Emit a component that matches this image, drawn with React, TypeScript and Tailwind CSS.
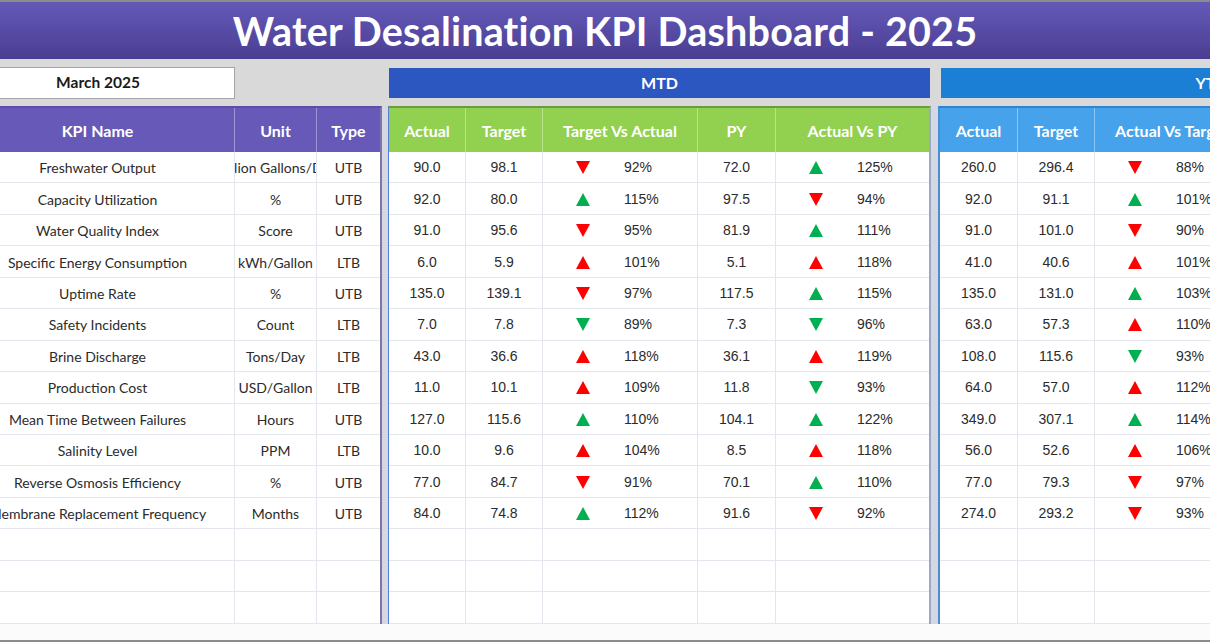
import React from 'react';

type Kpi = {
  name: string;
  unit: string;
  type: 'UTB' | 'LTB';
  mtd: [string, string, number, string, number];
  ytd: [string, string, number];
};

const kpis: Kpi[] = [
  { name: 'Freshwater Output', unit: 'Million Gallons/Day', type: 'UTB', mtd: ['90.0', '98.1', 92, '72.0', 125], ytd: ['260.0', '296.4', 88] },
  { name: 'Capacity Utilization', unit: '%', type: 'UTB', mtd: ['92.0', '80.0', 115, '97.5', 94], ytd: ['92.0', '91.1', 101] },
  { name: 'Water Quality Index', unit: 'Score', type: 'UTB', mtd: ['91.0', '95.6', 95, '81.9', 111], ytd: ['91.0', '101.0', 90] },
  { name: 'Specific Energy Consumption', unit: 'kWh/Gallon', type: 'LTB', mtd: ['6.0', '5.9', 101, '5.1', 118], ytd: ['41.0', '40.6', 101] },
  { name: 'Uptime Rate', unit: '%', type: 'UTB', mtd: ['135.0', '139.1', 97, '117.5', 115], ytd: ['135.0', '131.0', 103] },
  { name: 'Safety Incidents', unit: 'Count', type: 'LTB', mtd: ['7.0', '7.8', 89, '7.3', 96], ytd: ['63.0', '57.3', 110] },
  { name: 'Brine Discharge', unit: 'Tons/Day', type: 'LTB', mtd: ['43.0', '36.6', 118, '36.1', 119], ytd: ['108.0', '115.6', 93] },
  { name: 'Production Cost', unit: 'USD/Gallon', type: 'LTB', mtd: ['11.0', '10.1', 109, '11.8', 93], ytd: ['64.0', '57.0', 112] },
  { name: 'Mean Time Between Failures', unit: 'Hours', type: 'UTB', mtd: ['127.0', '115.6', 110, '104.1', 122], ytd: ['349.0', '307.1', 114] },
  { name: 'Salinity Level', unit: 'PPM', type: 'LTB', mtd: ['10.0', '9.6', 104, '8.5', 118], ytd: ['56.0', '52.6', 106] },
  { name: 'Reverse Osmosis Efficiency', unit: '%', type: 'UTB', mtd: ['77.0', '84.7', 91, '70.1', 110], ytd: ['77.0', '79.3', 97] },
  { name: 'Membrane Replacement Frequency', unit: 'Months', type: 'UTB', mtd: ['84.0', '74.8', 112, '91.6', 92], ytd: ['274.0', '293.2', 93] },
];

const EMPTY_ROWS = 3;

const Arrow = ({ pct, type }: { pct: number; type: 'UTB' | 'LTB' }) => {
  const up = pct >= 100;
  const good = (up && type === 'UTB') || (!up && type === 'LTB');
  const fill = good ? '#00b050' : '#ff0000';
  return (
    <svg width="14" height="13" viewBox="0 0 14 13">
      {up ? <polygon points="7,0 14,13 0,13" fill={fill} /> : <polygon points="0,0 14,0 7,13" fill={fill} />}
    </svg>
  );
};

const Cell = ({ w, children, last }: { w: string; children?: React.ReactNode; last?: boolean }) => (
  <div className={`${w} shrink-0 h-full flex items-center justify-center overflow-hidden whitespace-nowrap pt-[1px] ${last ? '' : 'border-r border-[#e3e6ec]'}`}>
    {children}
  </div>
);

const PctCell = ({ w, pct, type, last }: { w: string; pct?: number; type?: 'UTB' | 'LTB'; last?: boolean }) => (
  <div className={`${w} shrink-0 h-full flex items-center overflow-hidden whitespace-nowrap pt-[1px] ${last ? '' : 'border-r border-[#e3e6ec]'}`}>
    {pct !== undefined && type && (
      <>
        <div className="w-[33px] shrink-0" />
        <Arrow pct={pct} type={type} />
        <div className="w-[34px] shrink-0" />
        <span>{pct}%</span>
      </>
    )}
  </div>
);

const HeadCell = ({ w, label, line }: { w: string; label: string; line?: string }) => (
  <div className={`${w} shrink-0 h-full flex items-center justify-center whitespace-nowrap pt-[2px] ${line ?? ''}`}>{label}</div>
);

const rowCls = 'h-[31.45px] flex border-b border-[#e3e6ec] bg-white';
const numFont = "font-['Liberation_Sans',Arial,sans-serif] text-[14px] text-[#2b2b2b]";

export default function App() {
  const rows = [...kpis, ...Array(EMPTY_ROWS).fill(null)] as (Kpi | null)[];

  return (
    <div className="w-[1210px] h-[642px] overflow-hidden flex flex-col bg-white border-t-2 border-b-2 border-[#8c8c8c] font-['Lato',sans-serif]">
      {/* Title */}
      <div className="h-[57px] shrink-0 bg-gradient-to-b from-[#6459b8] to-[#4a3e92] flex items-center justify-center">
        <h1 className="text-white font-bold text-[39.5px] tracking-[0.2px] leading-none">
          Water Desalination KPI Dashboard - 2025
        </h1>
      </div>

      {/* Month picker + section bars */}
      <div className="h-[47px] shrink-0 bg-[#d9d9d9] flex items-center">
        <div className="ml-[-39px] flex items-center">
          <div className="w-[274px] h-[32px] shrink-0 bg-white border border-[#a6a6a6] flex items-center justify-center font-bold text-[15.5px] text-[#1a1a1a]">
            March 2025
          </div>
          <div className="w-[154px] shrink-0" />
          <div className="w-[541px] h-[30px] shrink-0 bg-[#2c57c1] flex items-center justify-center text-white font-bold text-[16px]">
            MTD
          </div>
          <div className="w-[11px] shrink-0" />
          <div className="w-[541px] h-[30px] shrink-0 bg-[#1b7fd5] flex items-center justify-center text-white font-bold text-[16px]">
            YTD
          </div>
        </div>
      </div>

      {/* Tables */}
      <div className="h-[518px] shrink-0 bg-[#d5d8e0] flex ml-[-39px]">
        {/* KPI info */}
        <div className="w-[421px] shrink-0 border-t-2 border-r-2 border-t-[#5a4ea8] border-r-[#7c76ad] flex flex-col">
          <div className="h-[44px] flex bg-[#6659b7] text-white font-bold text-[16px]">
            <HeadCell w="w-[274px]" label="KPI Name" line="border-r border-[#9d95d6]" />
            <HeadCell w="w-[82px]" label="Unit" line="border-r border-[#9d95d6]" />
            <HeadCell w="w-[63px]" label="Type" />
          </div>
          {rows.map((r, i) => (
            <div key={i} className={`${rowCls} text-[14px] text-[#2b2b2b]`}>
              <Cell w="w-[274px]">{r?.name}</Cell>
              <Cell w="w-[82px]">{r?.unit}</Cell>
              <Cell w="w-[63px]" last>{r?.type}</Cell>
            </div>
          ))}
        </div>

        <div className="w-[6px] shrink-0" />

        {/* MTD */}
        <div className="w-[543px] shrink-0 border-t-2 border-l border-r-2 border-t-[#6f9a3e] border-l-[#4f7fd6] border-r-[#9ca8c9] flex flex-col">
          <div className="h-[44px] flex bg-[#92d050] text-white font-bold text-[16px]">
            <HeadCell w="w-[77px]" label="Actual" line="border-r border-[#b9e290]" />
            <HeadCell w="w-[77px]" label="Target" line="border-r border-[#b9e290]" />
            <HeadCell w="w-[155px]" label="Target Vs Actual" line="border-r border-[#b9e290]" />
            <HeadCell w="w-[78px]" label="PY" line="border-r border-[#b9e290]" />
            <HeadCell w="w-[153px]" label="Actual Vs PY" />
          </div>
          {rows.map((r, i) => (
            <div key={i} className={`${rowCls} ${numFont}`}>
              <Cell w="w-[77px]">{r?.mtd[0]}</Cell>
              <Cell w="w-[77px]">{r?.mtd[1]}</Cell>
              <PctCell w="w-[155px]" pct={r?.mtd[2]} type={r?.type} />
              <Cell w="w-[78px]">{r?.mtd[3]}</Cell>
              <PctCell w="w-[153px]" pct={r?.mtd[4]} type={r?.type} last />
            </div>
          ))}
        </div>

        <div className="w-[7px] shrink-0" />

        {/* YTD */}
        <div className="w-[543px] shrink-0 border-t-2 border-l-2 border-t-[#2f83d0] border-l-[#4a8ed8] flex flex-col">
          <div className="h-[44px] flex bg-[#46a2ea] text-white font-bold text-[16px]">
            <HeadCell w="w-[78px]" label="Actual" line="border-r border-[#8cc6f3]" />
            <HeadCell w="w-[77px]" label="Target" line="border-r border-[#8cc6f3]" />
            <HeadCell w="w-[155px]" label="Actual Vs Target" line="border-r border-[#8cc6f3]" />
            <HeadCell w="w-[78px]" label="PY" line="border-r border-[#8cc6f3]" />
            <HeadCell w="w-[153px]" label="Actual Vs PY" />
          </div>
          {rows.map((r, i) => (
            <div key={i} className={`${rowCls} ${numFont}`}>
              <Cell w="w-[78px]">{r?.ytd[0]}</Cell>
              <Cell w="w-[77px]">{r?.ytd[1]}</Cell>
              <PctCell w="w-[155px]" pct={r?.ytd[2]} type={r?.type} />
              <Cell w="w-[78px]" />
              <Cell w="w-[153px]" last />
            </div>
          ))}
        </div>
      </div>

      <div className="flex-1 bg-[#fbfbfb]" />
    </div>
  );
}
